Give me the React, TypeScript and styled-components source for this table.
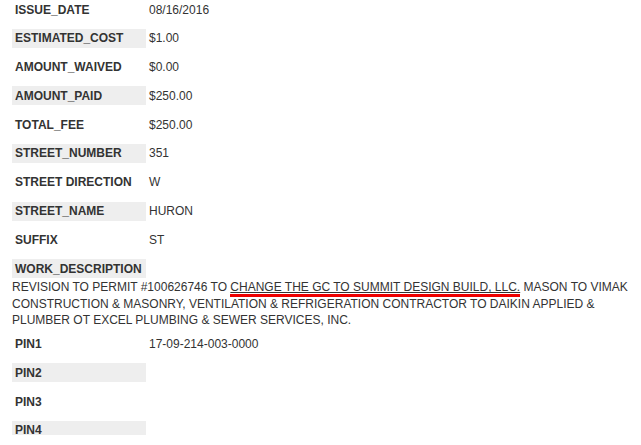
import React from 'react'
import styled, { createGlobalStyle } from 'styled-components'

const GlobalStyle = createGlobalStyle`
    body {
        margin: 0;
        background: #fff;
        font-family: 'Liberation Sans', Arial, sans-serif;
        color: #333;
    }
`

type Field = { name: string; value?: string }

const topFields: Field[] = [
    { name: 'ISSUE_DATE', value: '08/16/2016' },
    { name: 'ESTIMATED_COST', value: '$1.00' },
    { name: 'AMOUNT_WAIVED', value: '$0.00' },
    { name: 'AMOUNT_PAID', value: '$250.00' },
    { name: 'TOTAL_FEE', value: '$250.00' },
    { name: 'STREET_NUMBER', value: '351' },
    { name: 'STREET DIRECTION', value: 'W' },
    { name: 'STREET_NAME', value: 'HURON' },
    { name: 'SUFFIX', value: 'ST' },
]

const pinFields: Field[] = [
    { name: 'PIN1', value: '17-09-214-003-0000' },
    { name: 'PIN2' },
    { name: 'PIN3' },
    { name: 'PIN4' },
]

const App: React.FC = () => {
    return (
        <>
            <GlobalStyle />
            <Viewport>
                <Details>
                    {topFields.map((f, i) => (
                        <Row key={f.name}>
                            <Label $shaded={i % 2 === 1}>{f.name}</Label>
                            <Value>{f.value}</Value>
                        </Row>
                    ))}
                    <Block>
                        <Label $shaded>WORK_DESCRIPTION</Label>
                        <Description>
                            REVISION TO PERMIT #100626746 TO{' '}
                            <Marked>CHANGE THE GC TO SUMMIT DESIGN BUILD, LLC.</Marked> MASON
                            TO VIMAK CONSTRUCTION &amp; MASONRY, VENTILATION &amp; REFRIGERATION
                            CONTRACTOR TO DAIKIN APPLIED &amp; PLUMBER OT EXCEL PLUMBING &amp;
                            SEWER SERVICES, INC.
                        </Description>
                    </Block>
                    <Pins>
                        {pinFields.map((f, i) => (
                            <Row key={f.name}>
                                <Label $shaded={i % 2 === 1}>{f.name}</Label>
                                <Value>{f.value}</Value>
                            </Row>
                        ))}
                    </Pins>
                </Details>
            </Viewport>
        </>
    )
}

const Viewport = styled.div`
    height: 435px;
    overflow: hidden;
`

const Details = styled.div`
    padding: 0 0 0 12px;
    display: flex;
    flex-direction: column;
    gap: 9.8px;
`

const Row = styled.div`
    display: flex;
    align-items: center;
    height: 19px;
`

const Label = styled.div<{ $shaded?: boolean }>`
    width: 134px;
    height: 19px;
    box-sizing: border-box;
    padding-left: 3px;
    display: flex;
    align-items: center;
    flex-shrink: 0;
    font-size: 12px;
    font-weight: bold;
    color: #333;
    background: ${(p) => (p.$shaded ? '#eee' : 'transparent')};
`

const Value = styled.div`
    padding-left: 3px;
    font-size: 12px;
    color: #333;
`

const Block = styled.div`
    display: flex;
    flex-direction: column;
`

const Description = styled.div`
    font-size: 12px;
    line-height: 16.5px;
    color: #333;
    padding-top: 1px;
    padding-right: 8px;
`

const Marked = styled.span`
    text-decoration: underline;
    border-bottom: 3px solid #e00;
`

const Pins = styled.div`
    display: flex;
    flex-direction: column;
    gap: 9.8px;
    margin-top: -4px;
`

export default App
